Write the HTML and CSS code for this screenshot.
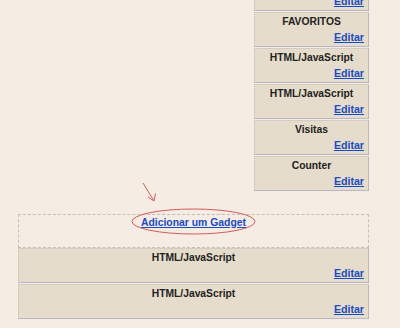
FILE: index.html
```html
<!DOCTYPE html>
<html lang="pt">
<head>
    <meta charset="UTF-8">
    <meta name="viewport" content="width=device-width, initial-scale=1.0">
    <title>Elementos da página</title>
    <link rel="stylesheet" href="styles.css">
</head>
<body>
    <div class="layout">
        <div class="sidebar">
            <div class="widget">
                <div class="widget-title">&nbsp;</div>
                <a class="edit" href="#">Editar</a>
            </div>
            <div class="widget">
                <div class="widget-title">FAVORITOS</div>
                <a class="edit" href="#">Editar</a>
            </div>
            <div class="widget">
                <div class="widget-title">HTML/JavaScript</div>
                <a class="edit" href="#">Editar</a>
            </div>
            <div class="widget">
                <div class="widget-title">HTML/JavaScript</div>
                <a class="edit" href="#">Editar</a>
            </div>
            <div class="widget">
                <div class="widget-title">Visitas</div>
                <a class="edit" href="#">Editar</a>
            </div>
            <div class="widget">
                <div class="widget-title">Counter</div>
                <a class="edit" href="#">Editar</a>
            </div>
        </div>

        <div class="add-gadget">
            <a href="#">Adicionar um Gadget</a>
        </div>
        <div class="widget">
            <div class="widget-title">HTML/JavaScript</div>
            <a class="edit" href="#">Editar</a>
        </div>
        <div class="widget">
            <div class="widget-title">HTML/JavaScript</div>
            <a class="edit" href="#">Editar</a>
        </div>
    </div>

    <!-- red marks drawn over the screenshot -->
    <svg class="marks" width="400" height="328" viewBox="0 0 400 328">
        <ellipse cx="193.5" cy="221.5" rx="61.5" ry="12.5" fill="none" stroke="#d35b5b" stroke-width="1"/>
        <path d="M143 183 L154 201 M148 197 L154 201 L155.5 193.5" fill="none" stroke="#d35b5b" stroke-width="1"/>
    </svg>
</body>
</html>
```

FILE: styles.css
```css
body {
    margin: 0;
    background-color: #f5ede4;
    font-family: "Liberation Sans", Arial, sans-serif;
    font-size: 10.3px;
    font-weight: bold;
    color: #222;
    height: 328px;
    overflow: hidden;
    position: relative;
}
.layout {
    margin-left: 18px;
    width: 351px;
}
.sidebar {
    margin-left: 236px;
    margin-top: -24px;
}
.widget {
    height: 33px;
    box-sizing: content-box;
    background-color: #e6dccb;
    border: 1px solid #b9b5c5;
    border-top-color: #d4ccc4;
    border-left: 1px dotted #c4bcae;
    margin-bottom: 1px;
    padding: 0 4px;
}
.widget-title {
    text-align: center;
    line-height: 13px;
    padding-top: 2px;
}
.edit {
    display: block;
    text-align: right;
    margin-top: 3px;
    line-height: 13px;
    color: #1a4bc2;
    text-decoration: underline;
    font-size: 10.6px;
}
.add-gadget {
    margin-top: 23px;
    height: 32px;
    border: 1px dashed #c6beb2;
    text-align: center;
    line-height: 13px;
}
.add-gadget a {
    display: inline-block;
    margin-top: 1px;
    color: #1a4bc2;
    text-decoration: underline;
    font-size: 10.4px;
}
.marks {
    position: absolute;
    left: 0;
    top: 0;
    pointer-events: none;
}
```
